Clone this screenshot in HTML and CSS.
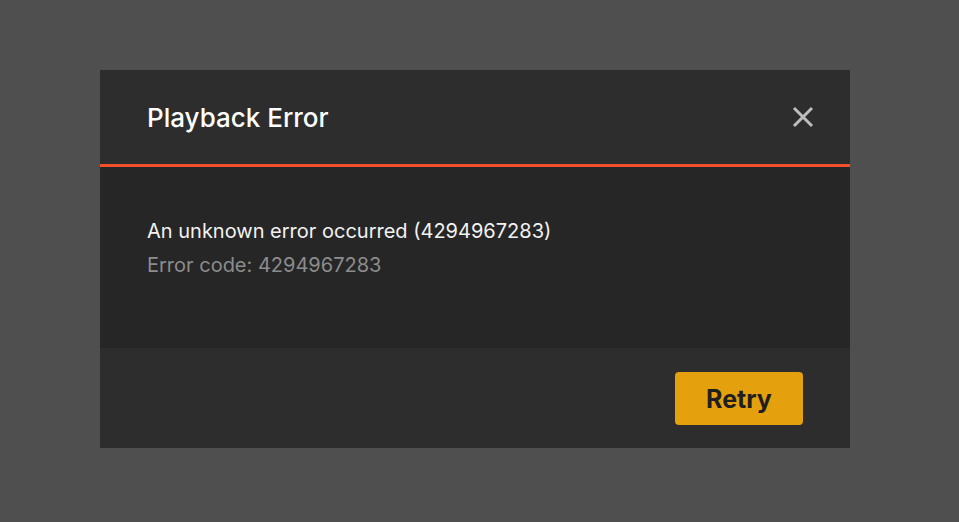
FILE: index.html
```html
<!DOCTYPE html>
<html lang="en">
<head>
<meta charset="utf-8">
<title>Playback Error</title>
<link rel="stylesheet" href="styles.css">
</head>
<body>
<div class="dialog">
  <div class="dialog-header">
    <h1 class="dialog-title">Playback Error</h1>
    <button class="close-btn" aria-label="Close">
      <svg width="22" height="22" viewBox="0 0 22 22"><path d="M2 2 L20 20 M20 2 L2 20" stroke="#bdbdbd" stroke-width="3" stroke-linecap="butt"/></svg>
    </button>
  </div>
  <div class="dialog-body">
    <p class="message">An unknown error occurred (4294967283)</p>
    <p class="code">Error code: 4294967283</p>
  </div>
  <div class="dialog-footer">
    <button class="retry-btn">Retry</button>
  </div>
</div>
</body>
</html>
```

FILE: styles.css
```css
html, body {
  margin: 0;
  padding: 0;
  background: #4f4f4f;
  font-family: Inter, "Noto Sans", sans-serif;
}
body {
  padding: 70px 0 0 100px;
}
.dialog {
  width: 750px;
  background: #262626;
}
.dialog-header {
  height: 94px;
  background: #2d2d2d;
  border-bottom: 3px solid #f2502b;
  display: flex;
  align-items: center;
  justify-content: space-between;
  padding: 0 36px 0 47px;
}
.dialog-title {
  margin: 0;
  font-size: 26px;
  font-weight: 500;
  color: #ffffff;
}
.close-btn {
  background: none;
  border: 0;
  padding: 0;
  width: 22px;
  height: 22px;
  display: flex;
}
.dialog-body {
  height: 181px;
  box-sizing: border-box;
  padding: 52px 47px 0;
}
.message, .code {
  margin: 0;
  font-size: 20px;
  line-height: 24px;
}
.message {
  color: #f2f2f2;
  margin-bottom: 10px;
}
.code {
  color: #8c8c8c;
}
.dialog-footer {
  height: 100px;
  box-sizing: border-box;
  background: #2d2d2d;
  display: flex;
  justify-content: flex-end;
  align-items: flex-start;
  padding: 24px 47px 0;
}
.retry-btn {
  width: 128px;
  height: 53px;
  border: 0;
  border-radius: 4px;
  background: #e5a00d;
  color: #1f1f1f;
  font-family: Inter, "Noto Sans", sans-serif;
  font-size: 25px;
  font-weight: 700;
}
```
